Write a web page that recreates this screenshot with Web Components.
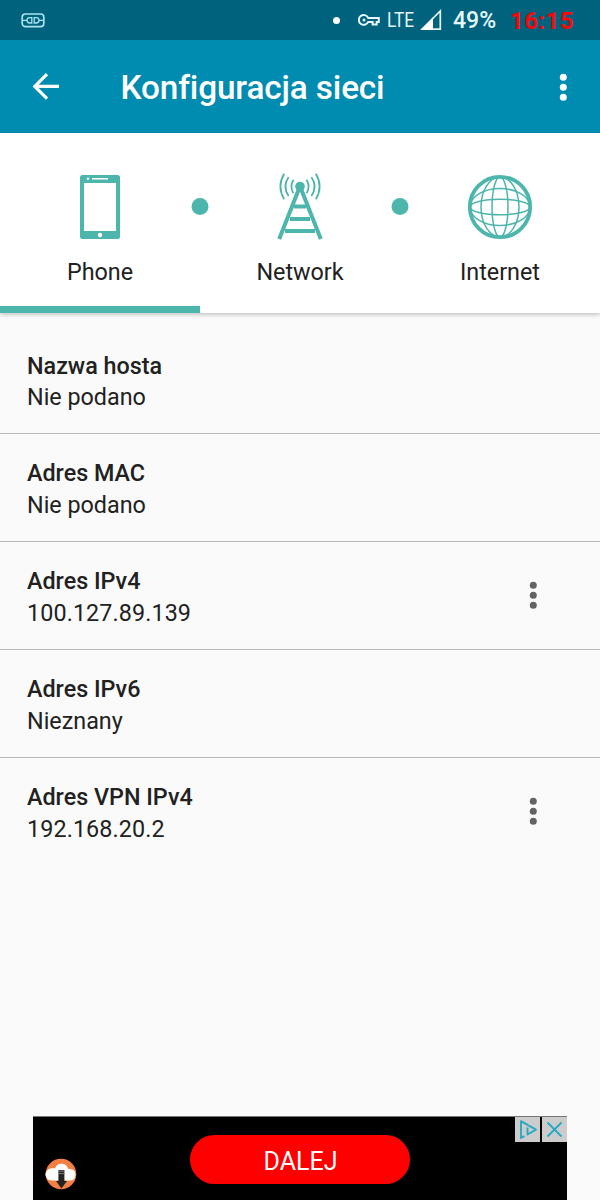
<!DOCTYPE html>
<html lang="pl">
<head>
<meta charset="UTF-8">
<meta name="viewport" content="width=device-width, initial-scale=1.0">
<title>Konfiguracja sieci</title>
<style>
    body {
        margin: 0;
        background: #fafafa;
        font-family: Roboto, sans-serif;
        color: #212121;
        --teal: #4db6ac;
    }
</style>
</head>
<body>
<network-app></network-app>

<script>
class StatusBar extends HTMLElement {
    constructor() {
        super();
        this.attachShadow({ mode: 'open' });
        this.shadowRoot.innerHTML = `
            <style>
                :host {
                    display: flex;
                    align-items: center;
                    height: 40px;
                    box-sizing: border-box;
                    padding: 0 26px 0 21px;
                    background: #00627d;
                    color: #e6f6fb;
                    font-size: 23px;
                    line-height: 40px;
                    white-space: nowrap;
                }
                svg { display: block; flex: none; }
                .dot { width: 7px; height: 7px; border-radius: 50%; background: #fff; margin-left: auto; }
                .key { margin-left: 18px; }
                .lte { width: 28px; margin-left: 7px; font-size: 21px; }
                .lte span { display: inline-block; transform: scaleX(0.82); transform-origin: 0 50%; }
                .signal { margin-left: 5px; }
                .battery { width: 44px; margin-left: 11px; font-weight: 500; padding-top: 2px; }
                .time { width: 64px; margin-left: 13px; font-size: 24px; font-weight: 700; color: #f40808; letter-spacing: 0.4px; padding-top: 2px; }
            </style>
            <svg width="24" height="15" viewBox="0 0 24 15" fill="none" stroke="#a9e3f2" stroke-width="1.3">
                <rect x="1.2" y="1" width="21.6" height="12.6" rx="3.2" stroke-width="1.7"/>
                <path d="M1 7.3H6M18 7.3H23M10.8 4.6H8.8Q6 4.6 6 7.3T8.8 10H10.8ZM13.2 4.6H15.2Q18 4.6 18 7.3T15.2 10H13.2Z"/>
            </svg>
            <div class="dot"></div>
            <svg class="key" width="22" height="14" viewBox="0 0 22 14" fill="none" stroke="#e6f6fb" stroke-width="2">
                <path d="M10.2 4.9H20.8V8.9H18.7V11.6H14.6V8.9H10.2A4.9 4.9 0 1 1 10.2 4.9Z"/>
                <circle cx="6" cy="6.9" r="1.5" fill="#e6f6fb" stroke="none"/>
            </svg>
            <div class="lte"><span>LTE</span></div>
            <svg class="signal" width="22" height="22" viewBox="0 0 22 22">
                <path d="M2 20.2H20.3V2Z" fill="none" stroke="#e6f6fb" stroke-width="1.7"/>
                <path d="M1 21H13V8.6Z" fill="#fff"/>
            </svg>
            <div class="battery">49%</div>
            <div class="time">16:15</div>
        `;
    }
}

class MoreIcon extends HTMLElement {
    constructor() {
        super();
        this.attachShadow({ mode: 'open' });
        this.shadowRoot.innerHTML = `
            <style>
                :host { display: block; width: 8px; height: 28px; }
                svg { display: block; }
            </style>
            <svg width="8" height="28" viewBox="0 0 8 28" fill="currentColor">
                <circle cx="4.3" cy="4.3" r="3.5"/>
                <circle cx="4.3" cy="14.3" r="3.5"/>
                <circle cx="4.3" cy="24.3" r="3.5"/>
            </svg>
        `;
    }
}

class AppBar extends HTMLElement {
    constructor() {
        super();
        this.attachShadow({ mode: 'open' });
        this.shadowRoot.innerHTML = `
            <style>
                :host {
                    display: flex;
                    align-items: center;
                    height: 93px;
                    box-sizing: border-box;
                    padding: 0 33px 0 32px;
                    background: #008bb0;
                    color: #fff;
                }
                h1 {
                    flex: 1;
                    margin: 3px 0 0 60.5px;
                    font-size: 33.33px;
                    font-weight: 500;
                    line-height: 40px;
                    letter-spacing: -0.13px;
                    white-space: nowrap;
                }
            </style>
            <svg width="28" height="28" viewBox="0 0 28 28" fill="none" stroke="#fff" stroke-width="3.2">
                <path d="M27 13.4H3M15 1.2L2.8 13.4L15 25.6"/>
            </svg>
            <h1><slot></slot></h1>
            <more-icon></more-icon>
        `;
    }
}

const TAB_ICONS = {
    phone: `
        <rect x="14" y="2" width="40" height="64" rx="2.5" fill="#4db6ac"/>
        <rect x="18" y="10" width="32" height="48" fill="#fff"/>
        <rect x="26" y="5" width="16" height="1.5" fill="#fff"/>
        <circle cx="22" cy="5.8" r="1.3" fill="#fff"/>
        <circle cx="34" cy="62" r="2.2" fill="#fff"/>`,
    network: `
        <g fill="none" stroke="#4db6ac">
            <path d="M33.3 15L13.2 66M34.7 15L54.8 66" stroke-width="4"/>
            <path d="M28 33.5H40M24 46H44M19 58H49" stroke-width="3.8"/>
            <path d="M27.5 6.8Q23.2 13.5 27.5 20.2M22.6 4Q16.2 13.5 22.6 23M18.2 .8Q10.5 13.5 18.2 26.2" stroke-width="1.8"/>
            <path d="M40.5 6.8Q44.8 13.5 40.5 20.2M45.4 4Q51.8 13.5 45.4 23M49.8 .8Q57.5 13.5 49.8 26.2" stroke-width="1.8"/>
        </g>
        <circle cx="34" cy="13.5" r="4.8" fill="#4db6ac"/>`,
    internet: `
        <g fill="none" stroke="#4db6ac" stroke-width="1.5">
            <circle cx="34" cy="34" r="30.2" stroke-width="3.8"/>
            <ellipse cx="34" cy="34" rx="19" ry="30"/>
            <ellipse cx="34" cy="34" rx="8" ry="30"/>
            <ellipse cx="34" cy="34" rx="30" ry="18.5"/>
            <ellipse cx="34" cy="34" rx="30" ry="7.8"/>
        </g>`
};

class TabItem extends HTMLElement {
    constructor() {
        super();
        this.attachShadow({ mode: 'open' });
    }

    connectedCallback() {
        this.shadowRoot.innerHTML = `
            <style>
                :host {
                    display: flex;
                    flex-direction: column;
                    align-items: center;
                    box-sizing: border-box;
                    height: 180px;
                    padding-top: 39.6px;
                    border-bottom: 7px solid transparent;
                    font-size: 23.33px;
                    line-height: 28px;
                }
                :host([active]) { border-bottom-color: var(--teal); }
                svg { display: block; }
                .label { margin-top: 17.4px; }
            </style>
            <svg width="68" height="68" viewBox="0 0 68 68">${TAB_ICONS[this.getAttribute('icon')]}</svg>
            <div class="label"><slot></slot></div>
        `;
    }
}

class TabBar extends HTMLElement {
    constructor() {
        super();
        this.attachShadow({ mode: 'open' });
        this.shadowRoot.innerHTML = `
            <style>
                :host {
                    display: grid;
                    grid-template-columns: repeat(3, 1fr);
                    position: relative;
                    height: 180px;
                    background: #fff;
                    box-shadow: 0 2px 4px rgba(0, 0, 0, 0.2);
                }
                /* the dots sit on the borders between two tabs */
                .dot {
                    position: absolute;
                    top: 65px;
                    width: 17px;
                    height: 17px;
                    border-radius: 50%;
                    background: var(--teal);
                    transform: translateX(-50%);
                }
                .first { left: 33.333%; }
                .second { left: 66.667%; }
            </style>
            <slot></slot>
            <div class="dot first"></div>
            <div class="dot second"></div>
        `;
    }
}

class InfoRow extends HTMLElement {
    constructor() {
        super();
        this.attachShadow({ mode: 'open' });
    }

    connectedCallback() {
        const menu = this.hasAttribute('menu') ? '<more-icon></more-icon>' : '';

        this.shadowRoot.innerHTML = `
            <style>
                :host {
                    display: flex;
                    justify-content: space-between;
                    align-items: center;
                    box-sizing: border-box;
                    height: 107.9px;
                    padding: 0 63px 0 27px;
                    border-bottom: 1px solid #b8b8b8;
                    font-size: 23.33px;
                    line-height: 31.6px;
                }
                :host(:last-of-type) { border-bottom-color: transparent; }
                .text { padding-top: 5.4px; }
                .title { font-weight: 500; }
                :host([menu]) .value { letter-spacing: 0.1px; }
                more-icon { color: #636363; }
            </style>
            <div class="text">
                <div class="title">${this.getAttribute('label')}</div>
                <div class="value"><slot></slot></div>
            </div>
            ${menu}
        `;
    }
}

class AdBanner extends HTMLElement {
    constructor() {
        super();
        this.attachShadow({ mode: 'open' });
        this.shadowRoot.innerHTML = `
            <style>
                :host {
                    display: grid;
                    grid-template-columns: 1fr 220px 1fr;
                    width: 534px;
                    height: 84px;
                    box-sizing: border-box;
                    margin: 0 auto;
                    border-top: 1px solid #777;
                    background: #000;
                }
                svg { display: block; }
                .logo { align-self: end; margin: 0 0 10px 12px; }
                .button {
                    height: 49px;
                    margin-top: 18px;
                    border-radius: 25px;
                    background: #f00;
                    color: #fff;
                    font-size: 25px;
                    line-height: 53px;
                    text-align: center;
                    text-indent: 1px;
                }
                .choices { display: flex; justify-content: flex-end; gap: 2px; }
                .choices svg { background: #ccc; }
            </style>
            <svg class="logo" width="32" height="32" viewBox="0 0 32 32">
                <circle cx="16" cy="16" r="15.3" fill="#f47f42"/>
                <path d="M7 22.5A6 6 0 0 1 5.5 10.6Q8 9.3 10 10.5A6.8 6.8 0 0 1 23 10.8Q30.5 10.4 30.5 17Q30 22.5 25 22.5Z" fill="#fff"/>
                <path d="M13.4 12H19.4V23H22L16.4 30.5L11 23H13.4Z" fill="#222"/>
                <path d="M13.4 13.2H19.4M13.4 15.6H19.4" stroke="#999" stroke-width=".8"/>
            </svg>
            <div class="button">DALEJ</div>
            <div class="choices">
                <svg width="25" height="25" viewBox="0 0 25 25" fill="none" stroke="#27a9c4" stroke-width="1.9" stroke-linejoin="round">
                    <path d="M9.5 19.2L6 21V4.2L21 12.6L12.5 17.5V10.5M12.5 6.8V8.6"/>
                </svg>
                <svg width="25" height="25" viewBox="0 0 25 25" fill="none" stroke="#27a9c4" stroke-width="1.8">
                    <path d="M5.5 5.5L19.5 19.5M19.5 5.5L5.5 19.5"/>
                </svg>
            </div>
        `;
    }
}

class NetworkApp extends HTMLElement {
    constructor() {
        super();
        this.attachShadow({ mode: 'open' });
        this.shadowRoot.innerHTML = `
            <style>
                :host { display: flex; flex-direction: column; height: 1200px; overflow: hidden; }
                main { flex: 1; padding-top: 13px; }
            </style>
            <status-bar></status-bar>
            <app-bar>Konfiguracja sieci</app-bar>
            <tab-bar>
                <tab-item icon="phone" active>Phone</tab-item>
                <tab-item icon="network">Network</tab-item>
                <tab-item icon="internet">Internet</tab-item>
            </tab-bar>
            <main>
                <info-row label="Nazwa hosta">Nie podano</info-row>
                <info-row label="Adres MAC">Nie podano</info-row>
                <info-row label="Adres IPv4" menu>100.127.89.139</info-row>
                <info-row label="Adres IPv6">Nieznany</info-row>
                <info-row label="Adres VPN IPv4" menu>192.168.20.2</info-row>
            </main>
            <ad-banner></ad-banner>
        `;
    }
}

customElements.define('status-bar', StatusBar);
customElements.define('more-icon', MoreIcon);
customElements.define('app-bar', AppBar);
customElements.define('tab-item', TabItem);
customElements.define('tab-bar', TabBar);
customElements.define('info-row', InfoRow);
customElements.define('ad-banner', AdBanner);
customElements.define('network-app', NetworkApp);
</script>
</body>
</html>
